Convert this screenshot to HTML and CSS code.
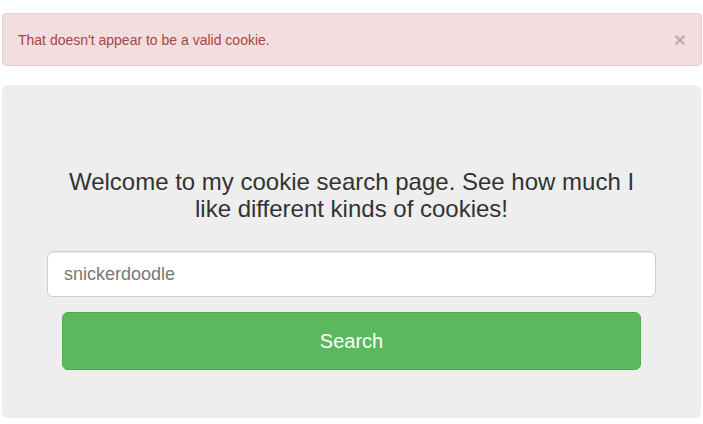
FILE: index.html
```html
<!DOCTYPE html>
<html>
<head>
<meta charset="utf-8">
<link rel="stylesheet" href="styles.css">
</head>
<body>
<div class="page">
  <div class="alert">
    <span class="alert-text">That doesn't appear to be a valid cookie.</span>
    <span class="close">&times;</span>
  </div>
  <div class="jumbotron">
    <h3 class="title">Welcome to my cookie search page. See how much I like different kinds of cookies!</h3>
    <form class="search-form">
      <input class="search-input" type="text" placeholder="snickerdoodle">
      <div class="btn-wrap">
        <button class="btn-search" type="button">Search</button>
      </div>
    </form>
  </div>
</div>
</body>
</html>
```
FILE: styles.css
```css
html, body {
  margin: 0;
  padding: 0;
  background: #fff;
  font-family: "Liberation Sans", Arial, Helvetica, sans-serif;
  color: #333;
}
.page {
  padding: 13px 1px 0 2px;
}
.alert {
  display: flex;
  justify-content: space-between;
  align-items: center;
  border: 1px solid #ebccd1;
  background: #f2dede;
  color: #a94442;
  border-radius: 4px;
  padding: 15px;
  font-size: 14px;
  line-height: 20px;
}
.close {
  font-size: 21px;
  font-weight: bold;
  line-height: 1;
  color: #cda8ab;
}
.jumbotron {
  margin-top: 19px;
  margin-right: 1px;
  background: #eee;
  border-radius: 6px;
  padding: 48px 45px;
}
.title {
  margin: 35px auto 29px;
  max-width: 590px;
  text-align: center;
  font-size: 24px;
  line-height: 27px;
  font-weight: 500;
  color: #333;
}
.search-form {
  margin: 0;
}
.search-input {
  display: block;
  box-sizing: border-box;
  width: 100%;
  height: 46px;
  margin: 0;
  padding: 10px 16px;
  font-family: "Liberation Sans", Arial, sans-serif;
  font-size: 18px;
  color: #555;
  background: #fff;
  border: 1px solid #ccc;
  border-radius: 6px;
  box-shadow: inset 0 1px 1px rgba(0,0,0,.075);
  outline: none;
}
.search-input::placeholder {
  color: #777;
  opacity: 1;
}
.btn-wrap {
  padding: 15px 15px 0;
}
.btn-search {
  display: block;
  box-sizing: border-box;
  width: 100%;
  height: 58px;
  margin: 0;
  font-family: "Liberation Sans", Arial, sans-serif;
  font-size: 20px;
  color: #fff;
  background: #5cb85c;
  border: 1px solid #4cae4c;
  border-radius: 6px;
  cursor: pointer;
}
```
